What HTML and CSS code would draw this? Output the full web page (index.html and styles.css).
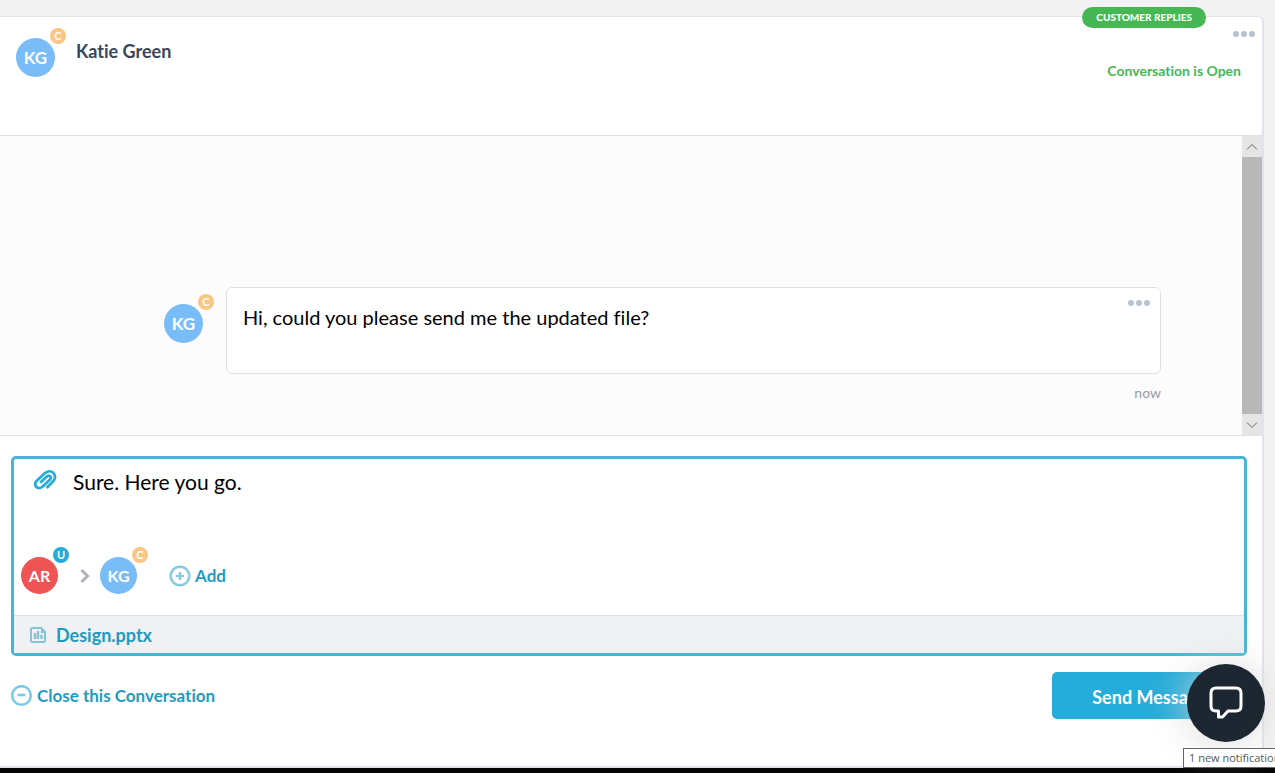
FILE: index.html
```html
<!DOCTYPE html>
<html lang="en">
<head>
  <meta charset="UTF-8" />
  <meta name="viewport" content="width=device-width, initial-scale=1.0" />
  <title>Conversation with Katie Green</title>
  <link rel="stylesheet" href="styles.css">
</head>
<body>
  <main class="panel">
    <span class="status-pill">CUSTOMER REPLIES</span>

    <header class="header">
      <div class="avatar customer">KG<span class="badge">C</span></div>
      <h1 class="name">Katie Green</h1>
      <div class="header-side">
        <button class="dots" type="button" aria-label="Conversation options"><i></i><i></i><i></i></button>
        <p class="state">Conversation is Open</p>
      </div>
    </header>

    <section class="thread">
      <div class="messages">
        <div class="avatar customer">KG<span class="badge">C</span></div>
        <div class="message">
          <div class="bubble">
            <p>Hi, could you please send me the updated file?</p>
            <button class="dots" type="button" aria-label="Message options"><i></i><i></i><i></i></button>
          </div>
          <time class="time">now</time>
        </div>
      </div>
      <div class="scrollbar">
        <button type="button" aria-label="Scroll up">
          <svg width="12" height="8" viewBox="0 0 12 8"><path d="M1 6.5L6 1.5L11 6.5" /></svg>
        </button>
        <div class="thumb"></div>
        <button type="button" aria-label="Scroll down">
          <svg width="12" height="8" viewBox="0 0 12 8"><path d="M1 1.5L6 6.5L11 1.5" /></svg>
        </button>
      </div>
    </section>

    <form class="reply">
      <div class="composer">
        <div class="write">
          <button class="attach" type="button" aria-label="Attach a file">
            <svg width="24" height="24" viewBox="0 0 24 24"><path d="M13.6 20L20 13.4C22.6 10.7 22.8 7.2 20.4 4.9C18 2.7 14.4 2.9 11.8 5.3L4 12.6C1.8 14.7 1.6 17.4 3.3 19C5 20.6 7.8 20.3 9.7 18.5L16.7 11.7C17.9 10.5 18.1 9.2 17.2 8.3C16.3 7.4 14.7 7.6 13.5 8.7L7.2 14.8" /></svg>
          </button>
          <textarea class="text" aria-label="Reply">Sure. Here you go.</textarea>
        </div>
        <div class="people">
          <div class="avatar small user">AR<span class="badge">U</span></div>
          <svg class="arrow" width="12" height="16" viewBox="0 0 12 16"><path d="M2.5 2L8.5 8L2.5 14" /></svg>
          <div class="avatar small customer">KG<span class="badge">C</span></div>
          <button class="link add" type="button">
            <svg width="22" height="22" viewBox="0 0 22 22"><circle cx="11" cy="11" r="9.3" /><path d="M7 11H15M11 7V15" /></svg>
            Add
          </button>
        </div>
        <div class="files">
          <svg width="16" height="16" viewBox="0 0 16 16"><path d="M11 1H2.5Q1 1 1 2.5V13.5Q1 15 2.5 15H13.5Q15 15 15 13.5V5Z" /><path class="fill" d="M11 0L16 5V6H11Z" /><path class="bars" d="M5 12V6M8 12V4M11.5 12V8" /></svg>
          <a href="#">Design.pptx</a>
        </div>
      </div>
      <div class="actions">
        <button class="link close" type="button">
          <svg width="22" height="22" viewBox="0 0 22 22"><circle cx="10.5" cy="10.5" r="9.3" /><path d="M6.5 10H14.5" /></svg>
          Close this Conversation
        </button>
        <button class="send" type="submit">Send Message</button>
      </div>
    </form>
  </main>

  <button class="launcher" type="button" aria-label="Open chat">
    <svg width="34" height="34" viewBox="0 0 34 34"><path d="M7 2H27Q32 2 32 7V20Q32 25 27 25H19L13.5 31H9.5V25H7Q2 25 2 20V7Q2 2 7 2Z" /></svg>
  </button>
  <div class="tooltip" role="tooltip">1 new notification</div>
</body>
</html>
```

FILE: styles.css
```css
* {
  box-sizing: border-box;
}

body {
  margin: 0;
  padding: 16px 11px 0 0;
  height: 100vh;
  display: flex;
  background: #f3f3f3;
  border-bottom: 5px solid #050505;
  font-family: Lato, "Liberation Sans", sans-serif;
  font-variant-ligatures: none;
  overflow: hidden;
}

h1, p {
  margin: 0;
}

button {
  padding: 0;
  border: none;
  background: none;
  font: inherit;
  cursor: pointer;
}

svg {
  fill: none;
  stroke: currentColor;
  flex: none;
}

.panel {
  position: relative;
  flex: 1;
  display: flex;
  flex-direction: column;
  background: #fff;
  border: solid #dfe3eb;
  border-width: 1px 2px 2px 0;
  border-radius: 0 6px 0 0;
}

.status-pill {
  position: absolute;
  top: -10px;
  right: 56px;
  padding: 0 14px;
  border-radius: 11px;
  background: #45b854;
  color: #fff;
  font-size: 10px;
  font-weight: 900;
  line-height: 21px;
}

/* avatars */
.avatar {
  position: relative;
  flex: none;
  width: 39px;
  height: 39px;
  border-radius: 50%;
  color: #fff;
  font-size: 17px;
  font-weight: 700;
  line-height: 40px;
  text-align: center;
}

.avatar.small {
  width: 37px;
  height: 37px;
  font-size: 16px;
  line-height: 38px;
}

.customer {
  background: #78bdf8;
}

.user {
  background: #ef5353;
}

.badge {
  position: absolute;
  top: -10px;
  right: -11px;
  width: 16px;
  height: 16px;
  border-radius: 50%;
  background: #fac684;
  font-size: 11px;
  font-weight: 700;
  line-height: 16px;
}

.user .badge {
  background: #26acd9;
}

.dots {
  display: flex;
  gap: 2px;
}

.dots i {
  width: 6px;
  height: 6px;
  border-radius: 50%;
  background: #b7c2d0;
}

/* header */
.header {
  display: flex;
  align-items: flex-start;
  height: 119px;
  padding: 21px 21px 0 16px;
  border-bottom: 1px solid #dfe1e8;
}

.name {
  margin-left: 21px;
  color: #3a465b;
  font-size: 18px;
  font-weight: 700;
  line-height: 26px;
}

.header-side {
  margin: -7px 0 0 auto;
  display: flex;
  flex-direction: column;
  align-items: flex-end;
  gap: 24px;
}

.header-side .dots {
  margin-right: -14px;
}

.state {
  color: #45b854;
  font-size: 14px;
  font-weight: 700;
  line-height: 20px;
}

/* thread */
.thread {
  display: flex;
  height: 300px;
  background: #fcfcfc;
  border-bottom: 1px solid #dfe1e8;
}

.messages {
  flex: 1;
  display: flex;
  align-items: flex-end;
  padding: 0 81px 32px 164px;
}

.messages .avatar {
  margin: 0 23px 60px 0;
}

.message {
  flex: 1;
}

.bubble {
  display: flex;
  justify-content: space-between;
  height: 87px;
  padding: 12px 10px 12px 16px;
  background: #fff;
  border: 1px solid #dfe1e8;
  border-radius: 6px;
}

.bubble p {
  font-size: 20px;
  line-height: 34px;
}

.time {
  display: block;
  margin-top: 9px;
  color: #979ba3;
  font-size: 14px;
  line-height: 20px;
  text-align: right;
}

.scrollbar {
  width: 20px;
  display: flex;
  flex-direction: column;
}

.scrollbar button {
  display: flex;
  align-items: center;
  justify-content: center;
  height: 21px;
  background: #e5e5e5;
  color: #666;
}

.thumb {
  flex: 1;
  background: #b8b8b8;
}

/* reply */
.reply {
  flex: 1;
  padding: 20px 15px 0 11px;
}

.composer {
  height: 200px;
  display: flex;
  flex-direction: column;
  border: 3px solid #47b4d8;
  border-radius: 5px;
}

.write {
  flex: 1;
  display: flex;
  align-items: flex-start;
  padding: 9px 16px 0 19px;
}

.attach {
  height: 24px;
  color: #26acd9;
}

.attach svg {
  stroke-width: 2.8;
}

.text {
  flex: 1;
  height: 60px;
  margin-left: 16px;
  padding: 0;
  border: none;
  outline: none;
  resize: none;
  font: 21px/28px Lato, "Liberation Sans", sans-serif;
  color: #000;
}

.people {
  display: flex;
  align-items: center;
  padding: 0 7px 21px;
}

.arrow {
  margin: 0 9px 0 21px;
  color: #b0b2bd;
  stroke-width: 3;
}

.link {
  display: flex;
  align-items: center;
  gap: 4px;
  color: #1f9bc1;
  font-size: 17px;
  font-weight: 700;
  line-height: 24px;
}

.link svg {
  color: #8acbdf;
  stroke-width: 2.6;
}

.add {
  margin-left: 32px;
}

.close svg {
  color: #79cbe7;
}

.files {
  display: flex;
  align-items: center;
  gap: 10px;
  height: 38px;
  padding: 0 16px;
  background: #eff1f3;
  border-top: 1px solid #dfe1e8;
  color: #85c3d8;
}

.files svg {
  stroke-width: 2;
}

.files .fill {
  fill: currentColor;
  stroke: none;
}

.files .bars {
  stroke-width: 2.4;
}

.files a {
  color: #1f9bc1;
  font-size: 18px;
  font-weight: 700;
  text-decoration: none;
}

.actions {
  display: flex;
  justify-content: space-between;
  align-items: center;
  padding-top: 16px;
}

.send {
  width: 195px;
  height: 47px;
  border-radius: 5px;
  background: #26acd9;
  color: #fff;
  font-size: 18px;
  font-weight: 700;
  line-height: 51px;
}

/* chat widget */
.launcher {
  position: fixed;
  right: 10px;
  bottom: 31px;
  width: 78px;
  height: 78px;
  border-radius: 50%;
  background: #1d2731;
  box-shadow: 0 2px 40px rgba(215, 215, 215, 0.9);
  color: #fff;
}

.launcher svg {
  display: block;
  margin: auto;
  stroke-width: 3;
  stroke-linejoin: round;
}

.tooltip {
  position: fixed;
  right: -15px;
  bottom: 5px;
  width: 107px;
  padding-left: 5px;
  background: #fff;
  border: 1px solid #666;
  color: #575757;
  font: 11px/18px "Open Sans", sans-serif;
  white-space: nowrap;
}
```
